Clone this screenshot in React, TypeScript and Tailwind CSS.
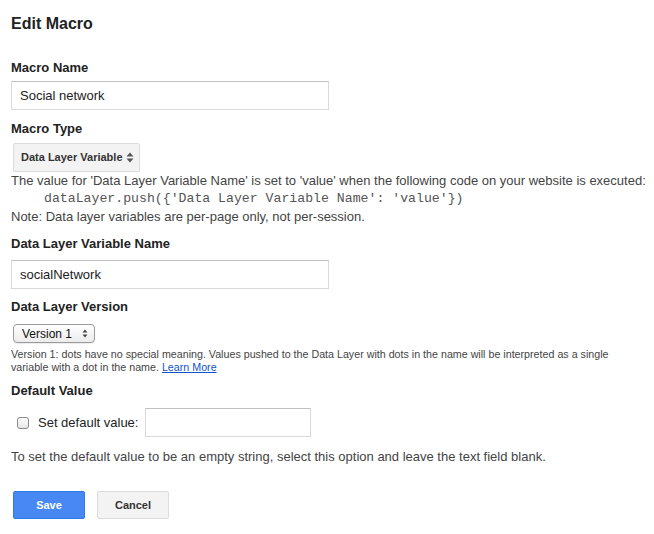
import React from "react";

function UpDown({ className }: { className?: string }) {
  return (
    <svg width="8" height="11" viewBox="0 0 8 11" className={className}>
      <path d="M4 0.5 L7.5 4.5 L0.5 4.5 Z" fill="currentColor" />
      <path d="M4 10.5 L7.5 6.5 L0.5 6.5 Z" fill="currentColor" />
    </svg>
  );
}

export default function App() {
  return (
    <div className="min-h-[534px] w-[654px] bg-white pl-[11px] pt-[14px] font-['Liberation_Sans',Arial,sans-serif] text-[#222]">
      <h1 className="text-[16px] font-bold leading-[20px] text-[#222]">Edit Macro</h1>

      <div className="mt-[26px] text-[13px] font-bold leading-[16px]">Macro Name</div>
      <div className="mt-[5px] flex h-[29px] w-[318px] items-center border border-[#d9d9d9] border-t-[#c0c0c0] px-[8px] text-[13px] text-[#222]">
        Social network
      </div>

      <div className="mt-[11px] text-[13px] font-bold leading-[16px]">Macro Type</div>
      <div className="ml-[2px] mt-[6px] flex h-[29px] w-[127px] items-center justify-between rounded-[2px] border border-[#dcdcdc] bg-[#f3f3f3] pl-[7px] pr-[5px] text-[11px] font-bold text-[#333]">
        <span>Data Layer Variable</span>
        <UpDown className="text-[#555]" />
      </div>

      <div className="text-[13px] leading-[18px] text-[#444]">
        <div>The value for 'Data Layer Variable Name' is set to 'value' when the following code on your website is executed:</div>
        <div className="pl-[33px] font-['Liberation_Mono',monospace] text-[13.2px] text-[#555]">
          dataLayer.push({"{"}'Data Layer Variable Name': 'value'{"}"})
        </div>
        <div>Note: Data layer variables are per-page only, not per-session.</div>
      </div>

      <div className="mt-[10px] text-[13px] font-bold leading-[16px]">Data Layer Variable Name</div>
      <div className="mt-[8px] flex h-[29px] w-[318px] items-center border border-[#d9d9d9] border-t-[#c0c0c0] px-[8px] text-[13px] text-[#222]">
        socialNetwork
      </div>

      <div className="mt-[10px] text-[13px] font-bold leading-[16px]">Data Layer Version</div>
      <div className="ml-[2px] mt-[9px] flex h-[19px] w-[82px] items-center justify-between rounded-[4px] border border-[#9a9a9a] bg-gradient-to-b from-white to-[#ececec] pl-[8px] pr-[6px] text-[12px] text-[#111] shadow-[0_1px_1px_rgba(0,0,0,0.08)]">
        <span>Version 1</span>
        <svg width="6" height="9" viewBox="0 0 6 9" className="text-[#444]">
          <path d="M3 0.5 L5.5 3.5 L0.5 3.5 Z" fill="currentColor" />
          <path d="M3 8.5 L5.5 5.5 L0.5 5.5 Z" fill="currentColor" />
        </svg>
      </div>

      <div className="mt-[5px] pr-[10px] text-[10.7px] leading-[13px] text-[#444]">
        Version 1: dots have no special meaning. Values pushed to the Data Layer with dots in the name will be interpreted as a single variable with a dot in the name.{" "}
        <a className="text-[#15c] underline" href="#">Learn More</a>
      </div>

      <div className="mt-[9px] text-[13px] font-bold leading-[16px]">Default Value</div>
      <div className="mt-[9px] flex h-[29px] items-center">
        <span className="ml-[6px] inline-block h-[12px] w-[12px] rounded-[3px] border border-[#8a8a8a] bg-gradient-to-b from-white to-[#e6e6e6] shadow-[inset_0_1px_1px_rgba(255,255,255,0.8)]" />
        <span className="ml-[9px] text-[13px] text-[#222]">Set default value:</span>
        <span className="ml-[7px] h-[29px] w-[166px] border border-[#d9d9d9] border-t-[#c0c0c0]" />
      </div>

      <div className="mt-[11px] text-[13px] leading-[18px] text-[#444]">
        To set the default value to be an empty string, select this option and leave the text field blank.
      </div>

      <div className="mt-[25px] flex gap-[12px] pl-[2px]">
        <button className="h-[28px] w-[72px] rounded-[2px] border border-[#3079ed] bg-[#4788f4] text-[11px] font-bold text-white">
          Save
        </button>
        <button className="h-[28px] w-[72px] rounded-[2px] border border-[#dcdcdc] bg-[#f3f3f3] text-[11px] font-bold text-[#333]">
          Cancel
        </button>
      </div>
    </div>
  );
}
